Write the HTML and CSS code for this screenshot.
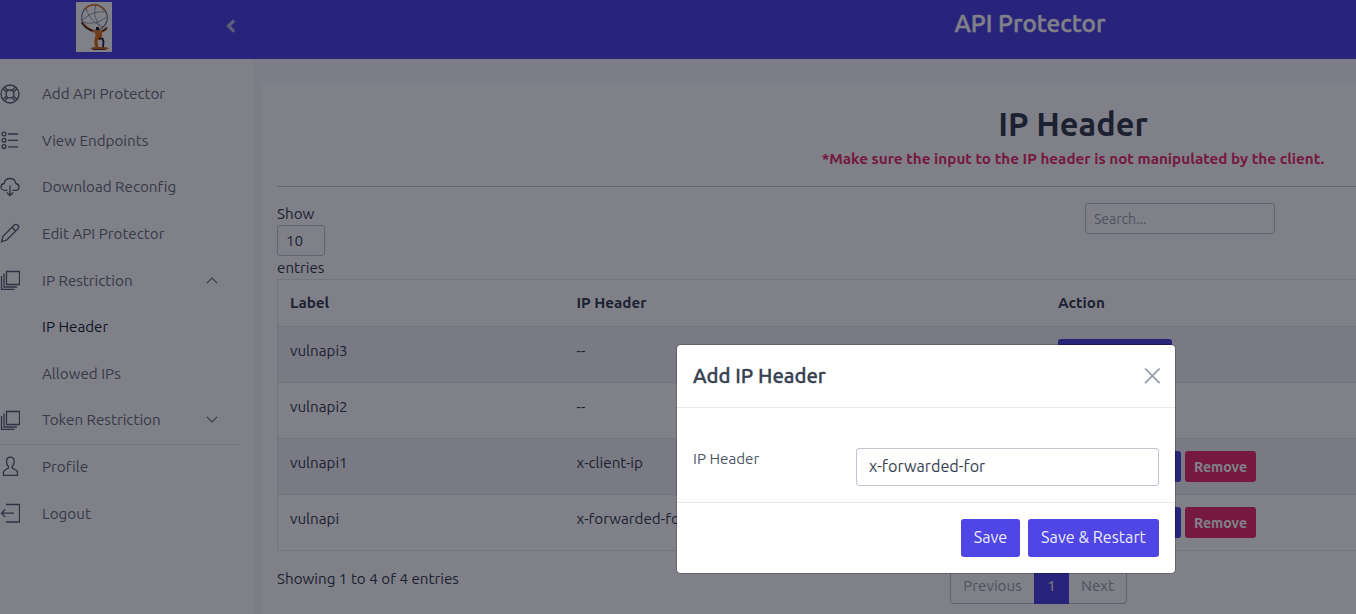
FILE: index.html
```html
<!DOCTYPE html>
<html lang="en">
<head>
<meta charset="utf-8">
<title>API Protector</title>
<link rel="stylesheet" href="styles.css">
</head>
<body>
<div class="app">
  <header class="topbar">
    <div class="brand">
      <svg class="logo" width="36" height="50" viewBox="0 0 36 50" fill="none">
        <rect width="36" height="50" fill="#fff"/>
        <circle cx="18.500" cy="15.500" r="12.800" stroke="#656a80" stroke-width="1.100"/>
        <path d="M6.500 18C13 12 22 8 30 10.500M7 20c8 3 18 0 23-5M10 6c3 10 9 16 17 19M20 3c-3 7-1 14 4 21" stroke="#70748a" stroke-width=".7"/>
        <path d="M8.500 7.500Q12 3 18 2.800T28.500 8.500" stroke="#e07a20" stroke-width="1.600"/>
        <path d="M7 21.500q4 5 11 8M31 25q-2 4-8 5" stroke="#e07a20" stroke-width="2.300"/>
        <path d="M5.500 20.500q3 5.500 11 8.500M31 26.500l-6 3.500" stroke="#29242c" stroke-width="1.400"/>
        <path d="M20 25h3v3.500h-3z" fill="#29242c"/>
        <path d="M18 29q4-1.500 8.500 0l-.5 5-2 4h-5l.5-5z" fill="#e07a20"/>
        <path d="M21 35l-1.200 5 1.200 6" stroke="#df7417" stroke-width="3.400"/>
        <path d="M23 36.500l3.500.2 1 3-.5 6.300" stroke="#29242c" stroke-width="1.800"/>
        <ellipse cx="23.500" cy="46.500" rx="9" ry="1.600" fill="#d26c1c"/>
        <path d="M17 47.500h12" stroke="#50352d"/>
      </svg>
      <svg class="collapse" width="10" height="14" viewBox="0 0 10 14" fill="none" stroke="#bcb9df" stroke-width="3.200"><path d="M8.200 1.300 2.500 7l5.700 5.700"/></svg>
    </div>
    <div class="topbar-title">API Protector</div>
  </header>
  <div class="shell">
    <nav class="sidebar">
      <a class="item"><svg class="icon" viewBox="0 0 20 20"><circle cx="10" cy="10" r="9"/><circle cx="10" cy="10" r="4"/><path d="M3 4.700 6.700 8M4.700 3 8 6.700M12 6.700 15.300 3M13.300 8 17 4.700M6.700 12 3 15.300M8 13.300 4.700 17M13.300 12l3.700 3.300M12 13.300l3.300 3.700"/></svg><span>Add API Protector</span></a>
      <a class="item"><svg class="icon" viewBox="0 0 20 20"><circle cx="4" cy="4" r="1.900"/><circle cx="4" cy="10.300" r="1.900"/><circle cx="4" cy="16.600" r="1.900"/><path d="M8 4h10M8 10.300h10M8 16.800h10"/></svg><span>View Endpoints</span></a>
      <a class="item"><svg class="icon" viewBox="0 0 20 20"><path d="M7.500 13.300H4.800C2.500 13.300 1 11.800 1 9.900c0-1.900 1.200-3.100 3.200-3.400C4.600 3.400 7 1.500 10 1.500s5.400 1.900 5.800 5C17.800 6.800 19 8 19 9.900c0 1.900-1.500 3.400-3.800 3.400h-2.700M10 8.500v10M6.700 15.500l3.300 3 3.300-3"/></svg><span>Download Reconfig</span></a>
      <a class="item"><svg class="icon" viewBox="0 0 20 20"><path d="M1.500 18.700 3 13.300 14.300 2c1-1 2.400-.9 3.500.2s1.200 2.500.2 3.500L6.700 17zM12 4.300 15.700 8"/></svg><span>Edit API Protector</span></a>
      <a class="item"><svg class="icon" viewBox="0 0 20 20"><path d="M6.500 1.500h13v13h-13zM4 3.500V17h13M1.500 6v13.300h13"/></svg><span>IP Restriction</span><svg class="caret" viewBox="0 0 12 7"><path d="m1 6 5-5 5 5"/></svg></a>
      <a class="item item-active"><span>IP Header</span></a>
      <a class="item item-sub"><span>Allowed IPs</span></a>
      <a class="item"><svg class="icon" viewBox="0 0 20 20"><path d="M6.500 1.500h13v13h-13zM4 3.500V17h13M1.500 6v13.300h13"/></svg><span>Token Restriction</span><svg class="caret" viewBox="0 0 12 7"><path d="m1 1 5 5 5-5"/></svg></a>
      <hr class="sidebar-rule">
      <a class="item"><svg class="icon" viewBox="0 0 20 20"><path d="M8.500 12v-1.500C7 9.200 6.500 7.400 6.500 5.200 6.500 2.600 8 1.200 10.300 1.200s3.900 1.400 3.900 4c0 2.200-.600 4-2 5.300V12l4 2.200c1 .6 1.300 1.300 1.300 2.300v3H3.500v-3c0-1 .300-1.700 1.300-2.300z"/></svg><span>Profile</span></a>
      <a class="item"><svg class="icon" viewBox="0 0 20 20"><path d="M6 1.500h13.500v17.500H6M14 10.200H1.500M5.300 6.300 1.500 10.200l3.800 3.900"/></svg><span>Logout</span></a>
    </nav>
    <main class="card">
      <div class="card-head">
        <h1 class="title">IP Header</h1>
        <p class="warning">*Make sure the input to the IP header is not manipulated by the client.</p>
      </div>
      <div class="tools">
        <div class="length"><span>Show</span><span class="select">10</span><span>entries</span></div>
        <div class="search">Search...</div>
      </div>
      <div class="table">
        <div class="row row-head"><span>Label</span><span>IP Header</span><span>Action</span></div>
        <div class="row row-odd"><span>vulnapi3</span><span>--</span><div class="actions"><span class="btn btn-add"></span></div></div>
        <div class="row"><span>vulnapi2</span><span>--</span><div class="actions"><span class="btn btn-add"></span></div></div>
        <div class="row row-odd"><span>vulnapi1</span><span>x-client-ip</span><div class="actions"><span class="btn btn-update"></span><span class="btn btn-remove">Remove</span></div></div>
        <div class="row"><span>vulnapi</span><span>x-forwarded-for</span><div class="actions"><span class="btn btn-update"></span><span class="btn btn-remove">Remove</span></div></div>
      </div>
      <div class="table-foot">
        <span class="info">Showing 1 to 4 of 4 entries</span>
        <div class="pages"><span class="page page-prev">Previous</span><span class="page page-current">1</span><span class="page page-next">Next</span></div>
      </div>
    </main>
  </div>
</div>
<div class="backdrop">
  <section class="modal">
    <div class="modal-head"><h2 class="modal-title">Add IP Header</h2><svg class="close" width="16" height="16" viewBox="0 0 16 16" fill="none" stroke="#9299a5" stroke-width="1.600"><path d="m1 .5 14.600 14.600M15.600.5 1 15.100"/></svg></div>
    <div class="modal-body"><label class="field-label">IP Header</label><div class="field">x-forwarded-for</div></div>
    <div class="modal-foot"><span class="save save-narrow">Save</span><span class="save">Save &amp; Restart</span></div>
  </section>
</div>
</body>
</html>
```

FILE: styles.css
```css
* { box-sizing: border-box; }
html { overflow: hidden; }
body {
  margin: 0;
  height: 614px;
  overflow: hidden;
  font: 15.2px/22.8px Ubuntu, "Noto Sans", sans-serif;
  font-variant-ligatures: none;
  color: #374151;
}
.app { width: 100%; height: 614px; overflow: hidden; background: #f9f8fc; }
.topbar { display: flex; height: 59px; background: #4f46e5; }
.brand { display: flex; flex-shrink: 0; width: 254px; padding: 2px 0 0 76px; }
.logo { display: block; }
.collapse { margin: 17px 0 0 114px; }
.topbar-title { flex-shrink: 0; width: 1552px; padding-top: 7px; text-align: center; font-size: 24.300px; line-height: 32px; font-weight: 500; -webkit-text-stroke: .4px; color: #fff; }
.shell { display: flex; height: 555px; }
.sidebar { flex-shrink: 0; width: 254px; padding-top: 11.800px; background: #fff; color: #6b7280; }
.item { display: flex; align-items: center; height: 46.600px; position: relative; }
.item span { padding-top: 1px; }
.icon { width: 20px; height: 20px; margin: -1px 22px 0 0; fill: none; stroke: #5a6172; stroke-width: 1.300; }
.item-active, .item-sub { padding-left: 42px; }
.item-active { color: #1f2937; }
.caret { position: absolute; left: 206px; top: 19.500px; width: 12px; height: 7px; fill: none; stroke: #6b7280; stroke-width: 1.100; }
.sidebar-rule { width: 241px; height: 1px; margin: 0 0 -1px; border: 0; background: #e9e9ef; }
.card { flex-shrink: 0; width: 1624px; margin: 24px 0 0 7px; padding: 0 16px; background: #fff; border-radius: 4px; color: #374151; }
.card-head { height: 104px; padding-top: 20px; text-align: center; border-bottom: 1px solid #c9cbd3; }
.title { margin: 0; font-size: 32.500px; line-height: 42px; font-weight: 700; color: #374151; }
.warning { margin: 3px 0 0; font-size: 15.250px; font-weight: 700; color: #e8316c; }
.tools { display: flex; height: 92px; padding-top: 16px; }
.length { display: flex; flex-direction: column; width: 808px; }
.length span:first-child { height: 22px; }
.select { width: 48px; height: 31px; margin-bottom: 1px; padding: 4px 8px; border: 1px solid #c1c4ce; border-radius: 3px; }
.search { width: 190px; height: 31px; padding: 4px 8px; border: 1px solid #c1c4ce; border-radius: 3px; font-size: 14px; color: #9ca3af; }
.table { border: 1px solid #e5e7eb; }
.row { display: grid; grid-template-columns: 286.500px 481.500px 1fr; height: 56px; padding: 12px; border-bottom: 1px solid #e5e7eb; }
.row > span { padding-top: 1px; }
.row:last-child { height: 55px; border-bottom: 0; }
.row-head { height: 47px; font-weight: 700; }
.row-head > span { padding-top: 0; }
.row-odd { background: #f3f2f6; }
.actions { display: flex; gap: 4px; }
.btn { height: 31px; padding-top: 5px; border-radius: 3px; text-align: center; font-size: 14.100px; background: #4f46e5; color: #fff; }
.btn-add { width: 114px; }
.btn-update { width: 123px; }
.btn-remove { width: 71px; background: #e8316c; font-weight: 700; }
.table-foot { display: flex; padding-top: 17px; }
.info { width: 673px; }
.pages { display: flex; width: 177px; height: 36px; border: 1px solid #c1c4ce; border-radius: 4px; }
.page { padding: 6px 0; text-align: center; color: #9ca3af; }
.page-prev { width: 83px; }
.page-current { width: 35px; height: 36px; margin: -1px 0; padding-top: 7px; background: #4f46e5; color: #fff; }
.page-next { width: 57px; }
.backdrop { position: absolute; inset: 0; padding: 345px 0 0 677px; background: rgba(1, 1, 18, .5); }
.modal { width: 498px; height: 228px; background: #fff; border-radius: 4px; box-shadow: 0 0 0 1px rgba(0, 0, 0, .2); }
.modal-head { display: flex; justify-content: space-between; align-items: center; height: 63px; padding: 0 15px 0 16px; border-bottom: 1px solid #e8e9ec; }
.modal-title { margin: 0; font-size: 20.300px; line-height: 30px; font-weight: 500; -webkit-text-stroke: .35px; }
.modal-body { display: flex; justify-content: space-between; height: 95px; padding: 40px 16px 0; border-bottom: 1px solid #e8e9ec; }
.field-label { color: #4b5563; }
.field { width: 303px; height: 38px; padding: 5px 12px; border: 1px solid #c1c4ce; border-radius: 3px; font-size: 16.200px; line-height: 24px; }
.modal-foot { display: flex; justify-content: flex-end; gap: 8px; padding: 16px 16px 0; }
.save { width: 131px; height: 38px; border-radius: 3px; background: #4f46e5; color: #edecfc; text-align: center; font-size: 16.200px; line-height: 37px; }
.save-narrow { width: 59px; }
```
